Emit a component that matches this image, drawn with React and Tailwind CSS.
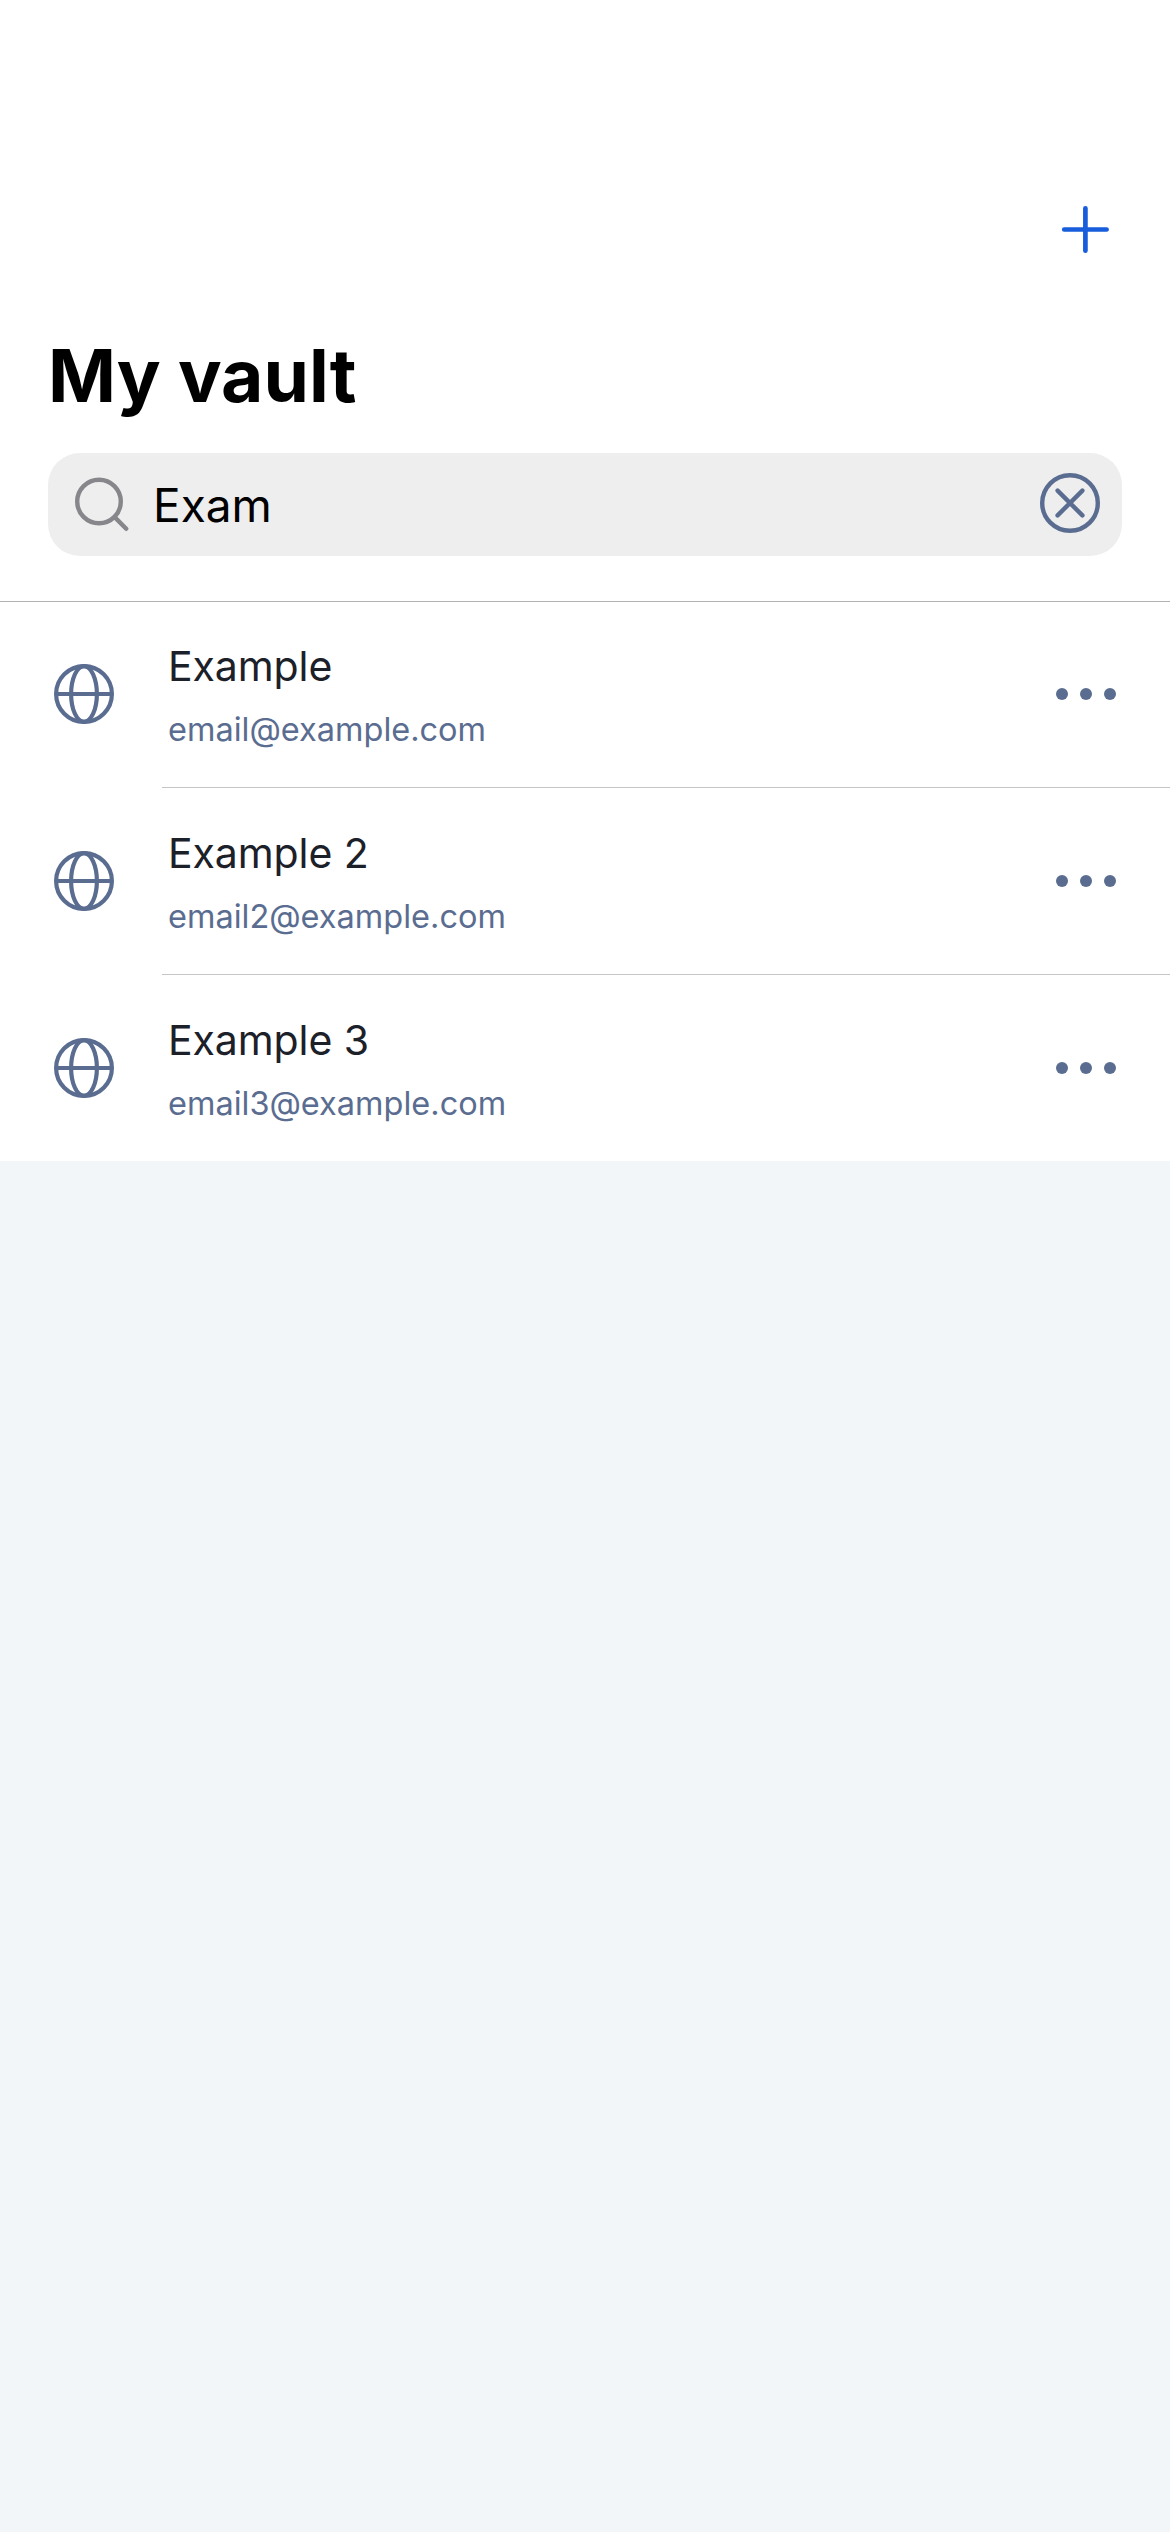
import React from 'react';

const items = [
  { name: 'Example', email: 'email@example.com' },
  { name: 'Example 2', email: 'email2@example.com' },
  { name: 'Example 3', email: 'email3@example.com' },
];

function PlusIcon() {
  return (
    <svg className="size-[60px]" viewBox="0 0 60 60" fill="none" stroke="#175ddc" strokeWidth="4.7" strokeLinecap="round">
      <path d="M30.4 8.3v42.4M9.2 29.5h42.4" />
    </svg>
  );
}

function SearchIcon() {
  return (
    <svg className="size-[60px] shrink-0" viewBox="0 0 60 60" fill="none" stroke="#87878b" strokeWidth="4.4" strokeLinecap="round">
      <circle cx="30" cy="26.5" r="21.8" />
      <path d="M46.4 42.9l10.8 10.9" />
    </svg>
  );
}

function ClearIcon() {
  return (
    <svg className="size-[60px] shrink-0" viewBox="0 0 60 60" fill="none" stroke="#5a6d91" strokeWidth="4.4" strokeLinecap="round">
      <circle cx="30" cy="30" r="27.8" />
      <path d="M17.6 17.6l24.8 24.8M42.4 17.6l-24.8 24.8" />
    </svg>
  );
}

function GlobeIcon() {
  return (
    <svg className="size-[60px] shrink-0" viewBox="0 0 60 60" fill="none" stroke="#5a6d91" strokeWidth="4.2">
      <circle cx="30" cy="30" r="27.9" />
      <ellipse cx="30" cy="30" rx="12.9" ry="27.9" />
      <path d="M2 30h56" />
    </svg>
  );
}

function MoreIcon() {
  return (
    <svg className="size-[60px] shrink-0" viewBox="0 0 60 60" fill="#5a6d91">
      <circle cx="6" cy="30" r="6" />
      <circle cx="30" cy="30" r="6" />
      <circle cx="54" cy="30" r="6" />
    </svg>
  );
}

function Row({ item, last }) {
  return (
    <li className={`flex bg-white pl-[54px] ${last ? 'h-[186px]' : 'h-[187px]'}`}>
      <button aria-label={item.name} className="mt-[63px] size-[60px]">
        <GlobeIcon />
      </button>
      <div className={`ml-12 flex flex-1 justify-between pr-[54px] ${last ? '' : 'border-b border-[#c6c6c8]'}`}>
        <div className="pt-[40px] pl-[6px]">
          <div className="h-[50px] text-[41px] leading-[50px] tracking-[-0.1px] text-[#1b2029]">{item.name}</div>
          <div className="mt-[19px] h-10 text-[32.5px] leading-10 text-[#5a6d91]">{item.email}</div>
        </div>
        <button aria-label="More" className="mt-[63px] size-[60px]">
          <MoreIcon />
        </button>
      </div>
    </li>
  );
}

export default function App() {
  return (
    <div className="h-[2532px] w-[1170px] overflow-hidden bg-[#f2f6f9] font-['Inter',sans-serif]">
      <header className="relative z-10 flex h-[602px] flex-col border-b border-[#b2b2b2] bg-white px-12 pt-[200px]">
        <button aria-label="Add" className="mr-[7px] size-[60px] self-end">
          <PlusIcon />
        </button>
        <h1 className="mt-[66px] h-[100px] text-[73px] leading-[100px] font-bold text-black">My vault</h1>
        <div className="mt-[27px] flex h-[103px] items-center rounded-[32px] bg-[#eeeeee] pr-[22px] pl-[21px]">
          <SearchIcon />
          <span className="ml-6 flex-1 text-[46px] leading-[60px] text-black">Exam</span>
          <button aria-label="Clear" className="-mt-[3px] size-[60px]">
            <ClearIcon />
          </button>
        </div>
      </header>
      <ul className="-mt-px">
        {items.map((item, i) => (
          <Row key={item.email} item={item} last={i === items.length - 1} />
        ))}
      </ul>
    </div>
  );
}
